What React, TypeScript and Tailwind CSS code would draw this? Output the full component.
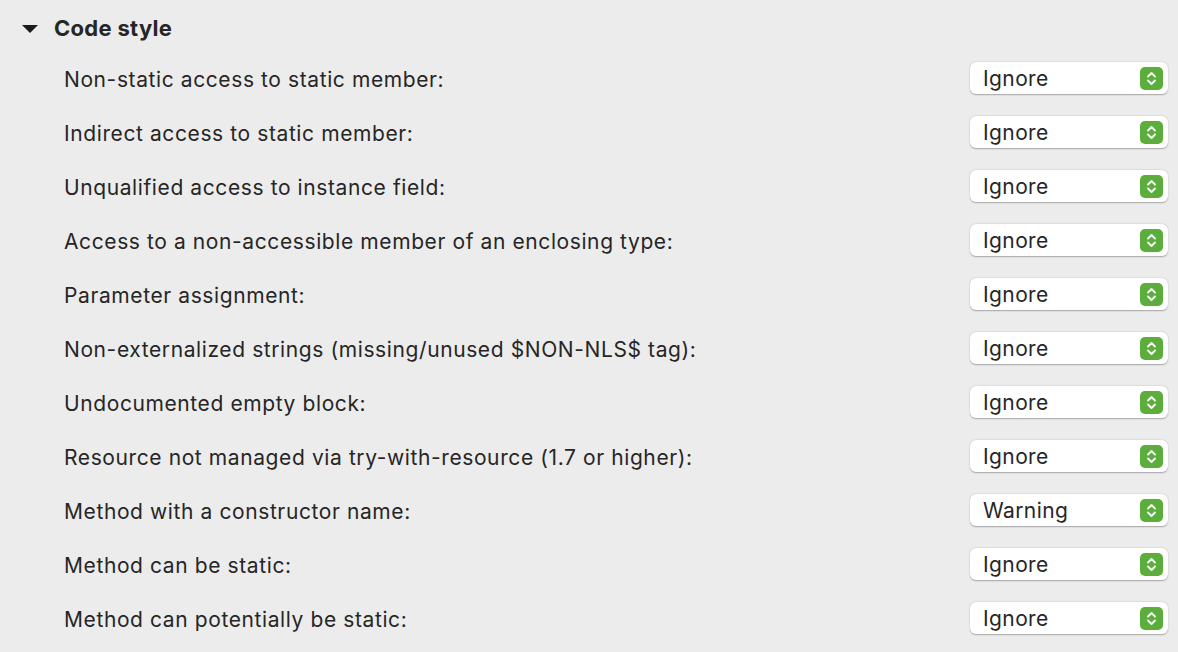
const rows: [string, string][] = [
  ["Non-static access to static member:", "Ignore"],
  ["Indirect access to static member:", "Ignore"],
  ["Unqualified access to instance field:", "Ignore"],
  ["Access to a non-accessible member of an enclosing type:", "Ignore"],
  ["Parameter assignment:", "Ignore"],
  ["Non-externalized strings (missing/unused $NON-NLS$ tag):", "Ignore"],
  ["Undocumented empty block:", "Ignore"],
  ["Resource not managed via try-with-resource (1.7 or higher):", "Ignore"],
  ["Method with a constructor name:", "Warning"],
  ["Method can be static:", "Ignore"],
  ["Method can potentially be static:", "Ignore"],
]

function Select({ value }: { value: string }) {
  return (
    <div className="flex items-center justify-between w-[198px] h-[32px] bg-white rounded-[6px] pl-[13px] pr-[5px] shadow-[0_0.5px_1.5px_rgba(0,0,0,0.3)]">
      <span className="pt-[2px] text-[21px] tracking-[0.4px] text-[#262626]">{value}</span>
      <div className="flex items-center justify-center w-[23px] h-[23px] rounded-[5px] bg-[#5cae3c]">
        <svg width="11" height="15" viewBox="0 0 11 15" fill="none">
          <path d="M2 5.5 L5.5 2 L9 5.5" stroke="white" strokeWidth="1.8" strokeLinecap="round" strokeLinejoin="round" />
          <path d="M2 9.5 L5.5 13 L9 9.5" stroke="white" strokeWidth="1.8" strokeLinecap="round" strokeLinejoin="round" />
        </svg>
      </div>
    </div>
  )
}

export default function App() {
  return (
    <div className="w-[1178px] h-[652px] bg-[#ececec] overflow-hidden font-['Inter','Liberation_Sans',sans-serif] text-[#262626]">
      <div className="flex items-center h-[51px] pt-[6px]">
        <svg className="ml-[22px]" width="16" height="10" viewBox="0 0 16 10">
          <path d="M0 1 L16 1 L8 9 Z" fill="#1a1a1a" />
        </svg>
        <span className="ml-[16px] text-[22px] font-bold tracking-[0.3px]">Code style</span>
      </div>
      <div className="flex flex-col">
        {rows.map(([label, value]) => (
          <div key={label} className="flex items-center justify-between h-[54px] pl-[64px] pr-[10px]">
            <span className="pt-[4px] text-[21px] tracking-[0.6px]">{label}</span>
            <Select value={value} />
          </div>
        ))}
      </div>
    </div>
  )
}
